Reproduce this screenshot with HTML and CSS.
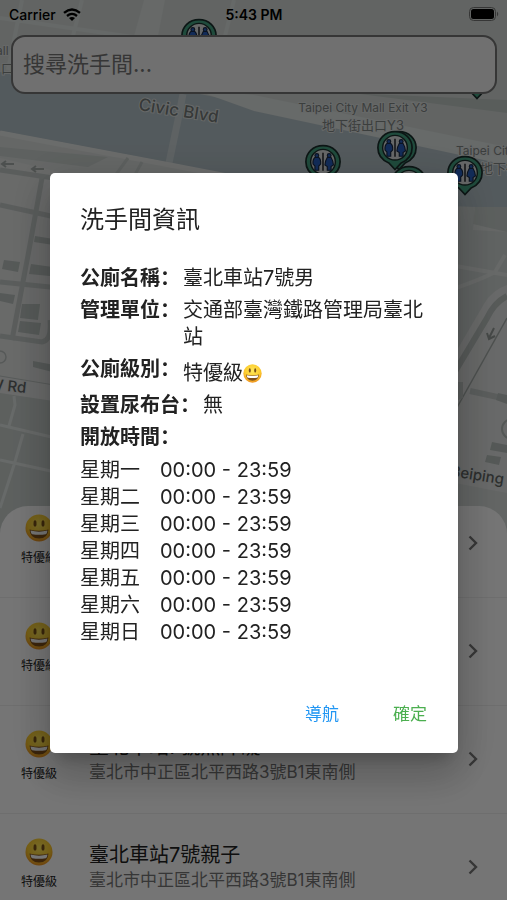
FILE: index.html
```html
<!DOCTYPE html>
<html lang="zh">
<head>
    <meta charset="UTF-8">
    <meta name="viewport" content="width=device-width, initial-scale=1.0">
    <title>洗手間資訊</title>
    <link rel="stylesheet" href="styles.css">
</head>
<body>
    <!-- shared icons -->
    <svg class="icon-defs" aria-hidden="true">
        <defs>
            <radialGradient id="face-fill" cx="50%" cy="35%" r="65%">
                <stop offset="0" stop-color="#ffe85a"/>
                <stop offset="0.65" stop-color="#fccb2d"/>
                <stop offset="1" stop-color="#ee9320"/>
            </radialGradient>
            <symbol id="smile" viewBox="0 0 28 28">
                <circle cx="14" cy="14" r="13.5" fill="url(#face-fill)"/>
                <ellipse cx="10" cy="9.4" rx="1.5" ry="3.2" fill="#7a5218"/>
                <ellipse cx="18" cy="9.4" rx="1.5" ry="3.2" fill="#7a5218"/>
                <path d="M4.5 15.5Q14 18.2 23.5 15.5Q23 24.5 14 24.5Q5 24.5 4.5 15.5Z" fill="#80501a"/>
                <path d="M5.6 16.6Q14 18.9 22.4 16.6Q22.2 20 20.8 20.2Q14 21.2 7.2 20.2Q5.8 20 5.6 16.6Z" fill="#fff"/>
            </symbol>
            <symbol id="pin" viewBox="0 0 40 46">
                <path d="M20 1.5C9.500 1.500 2 9 2 18.500C2 27 7.500 32 13.500 34.500L20 41.500L26.500 34.500C32.500 32 38 27 38 18.500C38 9 30.500 1.500 20 1.500Z" fill="#45a383" stroke="#1c302e" stroke-width="1.800"/>
                <circle cx="20" cy="18.500" r="13" fill="#dfe2e2" stroke="#1c302e" stroke-width="1.500"/>
                <path d="M20 9V28" stroke="#26282c" stroke-width="1.600"/>
                <g fill="#285fc0" stroke="#172945" stroke-width="1.200">
                    <path d="M11.500 14Q9 16 9.500 21L11.500 23V27.500H15.500V23L17.500 21Q18 16 15.500 14Z"/>
                    <circle cx="13.500" cy="12" r="2"/>
                    <path d="M24.500 14Q22.500 17 22 22L24.500 23.500V27.500H28.500V23.500L31 22Q30.500 17 28.500 14Z"/>
                    <circle cx="26.500" cy="12" r="2"/>
                </g>
            </symbol>
            <symbol id="chevron" viewBox="0 0 12 18">
                <path d="M2.500 2.500L9 9L2.500 15.500" fill="none" stroke="currentColor" stroke-width="2.400"/>
            </symbol>
        </defs>
    </svg>

    <div class="app">
        <svg class="map" viewBox="0 0 507 560" preserveAspectRatio="xMidYMin slice" aria-label="地圖">
            <rect width="507" height="560" fill="#d5dbd8"/>

            <!-- north side -->
            <path d="M144 0H165L158 36H134Z" fill="#e0e4e2"/>
            <path d="M22 0L8 70M82 0L72 40M0 18L140 38M234 0L225 36" fill="none" stroke="#dfe4e2" stroke-width="4"/>
            <path d="M160 85L507 100V113L360 94Z" fill="#c3cac7"/>

            <!-- Civic Blvd -->
            <path d="M0 72L190 92L254 105L507 165V212L380 205L170 163L0 131Z" fill="#b6c4ca"/>
            <path d="M190 88L254 95L507 147V165L254 111Z" fill="#e0e6e4"/>
            <path d="M183 94L178 120L169 163" fill="none" stroke="#ccd6d8" stroke-width="7"/>
            <path d="M0 131L170 163L380 205L507 210V240H0Z" fill="#dde1df"/>
            <path d="M0 133L170 165L300 190" fill="none" stroke="#e8ebe9" stroke-width="5"/>
            <path d="M0 147L108 157L88 167L0 156Z" fill="#cdd4d1"/>
            <path d="M128 158L112 180M142 162L132 180" stroke="#cbd2cf" stroke-width="3"/>

            <!-- blocks on the left -->
            <path d="M0 158L60 172V400H0Z" fill="#e4e6e5"/>
            <g fill="none" stroke="#c5cbc9" stroke-width="5">
                <path d="M0 170L60 179M0 205L60 218M0 282L60 288M0 336L42 342Q52 340 50 320"/>
                <path d="M42 178L29 250L12 340"/>
            </g>
            <g fill="#bbc3c0">
                <path d="M4 260L20 262L18 272L2 269Z"/>
                <path d="M31 264L60 268V277L29 274Z"/>
                <path d="M0 293L15 295L13 304L0 301Z"/>
                <path d="M22 304L40 304L38 320L20 318Z"/>
                <path d="M20 321L41 323L39 335L18 332Z"/>
                <path d="M35 236L60 240V246L34 242Z"/>
                <path d="M33 361L60 366V374L33 367Z"/>
            </g>
            <circle cx="0" cy="357" r="6" fill="none" stroke="#bcc2c0" stroke-width="1.500"/>
            <path d="M2 164H14M6 161L2 164L6 167M32 169H44M36 166L32 169L36 172" fill="none" stroke="#a8afac" stroke-width="2"/>
            <path d="M0 376L60 386V405L0 392Z" fill="#e6e8e7"/>
            <path d="M0 376L60 386" stroke="#bfc6c3" stroke-width="1"/>
            <path d="M0 393L60 402V560H0Z" fill="#cad1ce"/>
            <path d="M14 396L15 405L9 426M0 425L60 439M0 460L60 473M23 434L14 465L0 508" fill="none" stroke="#e1e6e4" stroke-width="3"/>

            <!-- streets on the right -->
            <path d="M450 206L475 207L473 230L507 232V560H450Z" fill="#d1d7d5"/>
            <path d="M475 207H507V232L473 224Z" fill="#c9d0cd"/>
            <path d="M450 265L507 275M450 290Q480 280 495 272L505 255" fill="none" stroke="#e0e4e2" stroke-width="4"/>
            <path d="M507 285Q492 290 484 304L450 362V560H507Z" fill="#e3e5e4"/>
            <path d="M507 296Q494 303 487 318L450 380" fill="none" stroke="#bdc4c1" stroke-width="6"/>
            <path d="M507 318L450 420" fill="none" stroke="#a8afac" stroke-width="1.500"/>
            <path d="M494 328L489 338M487 333L489 339L495 336" fill="none" stroke="#969d9a" stroke-width="2"/>
            <path d="M470 391L507 399M460 382V396L450 401" fill="none" stroke="#c5cbc9" stroke-width="6"/>
            <path d="M498 393L507 395V404L496 400ZM492 442L507 445V453L490 450ZM487 455L501 457L499 465L485 462Z" fill="#b9c1be"/>
            <circle cx="512" cy="429" r="10" fill="none" stroke="#b8bfbc" stroke-width="2"/>
            <path d="M450 482L507 493V560H450Z" fill="#d7dcda"/>

            <g class="map-label road">
                <text x="138" y="110" transform="rotate(9 138 110)">Civic Blvd</text>
            </g>
            <g class="map-label street">
                <text x="-12" y="389" transform="rotate(6 -12 389)">W Rd</text>
                <text x="450" y="476" transform="rotate(9 450 476)">Beiping W</text>
            </g>
            <g class="map-label place">
                <text x="363" y="112" text-anchor="middle">Taipei City Mall Exit Y3</text>
                <text x="456" y="155">Taipei City Mall</text>
                <text x="-4" y="55">all</text>
            </g>
            <g class="map-label place-zh">
                <text x="363" y="130" text-anchor="middle">地下街出口Y3</text>
                <text x="480" y="173">地下街</text>
                <text x="1" y="73">口</text>
            </g>

            <use href="#pin" x="180" y="18" width="38" height="44"/>
            <use href="#pin" x="458" y="59" width="38" height="44"/>
            <use href="#pin" x="304" y="144" width="38" height="44"/>
            <use href="#pin" x="390" y="165" width="38" height="44"/>
            <use href="#pin" x="380" y="130" width="38" height="44"/>
            <use href="#pin" x="376" y="130" width="38" height="44"/>
            <use href="#pin" x="446" y="155" width="38" height="44"/>
        </svg>

        <header class="status-bar">
            <span class="carrier">
                Carrier
                <svg class="wifi" viewBox="0 0 18 13">
                    <path d="M1 4.800Q9 -2 17 4.800" fill="none" stroke="#000" stroke-width="2.400"/>
                    <path d="M4 8Q9 3.800 14 8" fill="none" stroke="#000" stroke-width="2.300"/>
                    <path d="M6 10Q9 7.800 12 10L9 13Z"/>
                </svg>
            </span>
            <span class="clock">5:43 PM</span>
            <svg class="battery" viewBox="0 0 30 14">
                <rect x="0.500" y="0.500" width="26" height="13" rx="4" fill="none" stroke="#777"/>
                <rect x="2" y="2" width="23" height="10" rx="2.500"/>
                <path d="M28 4.500Q30.500 7 28 9.500Z" fill="#777"/>
            </svg>
        </header>

        <input class="search" type="text" placeholder="搜尋洗手間..." aria-label="搜尋洗手間">

        <section class="sheet">
            <ul class="toilet-list">
                <li class="toilet">
                    <div class="grade">
                        <svg class="face"><use href="#smile"/></svg>
                        <span>特優級</span>
                    </div>
                    <div class="place-info">
                        <h2>臺北車站7號男</h2>
                        <p>臺北市中正區北平西路3號B1東南側</p>
                    </div>
                    <svg class="chevron"><use href="#chevron"/></svg>
                </li>
                <li class="toilet">
                    <div class="grade">
                        <svg class="face"><use href="#smile"/></svg>
                        <span>特優級</span>
                    </div>
                    <div class="place-info">
                        <h2>臺北車站7號女</h2>
                        <p>臺北市中正區北平西路3號B1東南側</p>
                    </div>
                    <svg class="chevron"><use href="#chevron"/></svg>
                </li>
                <li class="toilet">
                    <div class="grade">
                        <svg class="face"><use href="#smile"/></svg>
                        <span>特優級</span>
                    </div>
                    <div class="place-info">
                        <h2>臺北車站7號無障礙</h2>
                        <p>臺北市中正區北平西路3號B1東南側</p>
                    </div>
                    <svg class="chevron"><use href="#chevron"/></svg>
                </li>
                <li class="toilet">
                    <div class="grade">
                        <svg class="face"><use href="#smile"/></svg>
                        <span>特優級</span>
                    </div>
                    <div class="place-info">
                        <h2>臺北車站7號親子</h2>
                        <p>臺北市中正區北平西路3號B1東南側</p>
                    </div>
                    <svg class="chevron"><use href="#chevron"/></svg>
                </li>
            </ul>
        </section>
    </div>

    <div class="backdrop">
        <div class="dialog" role="dialog" aria-labelledby="dialog-title">
            <h1 id="dialog-title">洗手間資訊</h1>

            <dl class="details">
                <div class="detail"><dt>公廁名稱：</dt><dd>臺北車站7號男</dd></div>
                <div class="detail"><dt>管理單位：</dt><dd>交通部臺灣鐵路管理局臺北站</dd></div>
                <div class="detail">
                    <dt>公廁級別：</dt>
                    <dd class="level">特優級<svg class="face-small"><use href="#smile"/></svg></dd>
                </div>
                <div class="detail"><dt>設置尿布台：</dt><dd>無</dd></div>
                <div class="detail"><dt>開放時間：</dt></div>
            </dl>

            <table class="hours">
                <tr><th scope="row">星期一</th><td>00:00 - 23:59</td></tr>
                <tr><th scope="row">星期二</th><td>00:00 - 23:59</td></tr>
                <tr><th scope="row">星期三</th><td>00:00 - 23:59</td></tr>
                <tr><th scope="row">星期四</th><td>00:00 - 23:59</td></tr>
                <tr><th scope="row">星期五</th><td>00:00 - 23:59</td></tr>
                <tr><th scope="row">星期六</th><td>00:00 - 23:59</td></tr>
                <tr><th scope="row">星期日</th><td>00:00 - 23:59</td></tr>
            </table>

            <div class="actions">
                <button class="navigate" type="button">導航</button>
                <button class="confirm" type="button">確定</button>
            </div>
        </div>
    </div>
</body>
</html>
```

FILE: styles.css
```css
* {
    box-sizing: border-box;
}

body {
    margin: 0;
    font-family: Inter, "Noto Sans CJK TC", sans-serif;
    color: #222;
}

h1, h2, p, ul, dl, dd {
    margin: 0;
    padding: 0;
    font-weight: normal;
}

.icon-defs {
    position: absolute;
    width: 0;
    height: 0;
}

.app {
    position: relative;
    display: flex;
    flex-direction: column;
    height: 100vh;
    overflow: hidden;
}

/* Map lies behind the whole screen */
.map {
    position: absolute;
    top: 0;
    left: 0;
    width: 100%;
    height: 560px;
}

.map-label {
    fill: #777c7b;
    stroke: #dfe3e2;
    stroke-width: 2px;
    paint-order: stroke;
}

.road {
    font-size: 17px;
    font-weight: 500;
}

.street {
    font-size: 15px;
    font-weight: 500;
    fill: #626665;
}

.place {
    font-size: 12px;
    fill: #828786;
}

.place-zh {
    font-size: 13px;
    fill: #828786;
}

.status-bar {
    position: relative;
    display: grid;
    grid-template-columns: 1fr auto 1fr;
    align-items: center;
    height: 28px;
    padding: 0 8px 0 9px;
    font-size: 14px;
    font-weight: 500;
    color: #000;
}

.carrier {
    display: flex;
    align-items: center;
    gap: 7px;
}

.wifi {
    width: 18px;
    height: 13px;
}

.clock {
    font-weight: 600;
}

.battery {
    width: 30px;
    height: 14px;
    justify-self: end;
}

.search {
    position: relative;
    height: 59px;
    margin: 7px 10px 0 11px;
    padding: 0 10px 2px;
    border: 2px solid #777;
    border-radius: 14px;
    background-color: #f4f4f4;
    font-family: inherit;
    font-size: 22px;
}

.search::placeholder {
    color: #777;
    opacity: 1;
}

/* Bottom sheet */
.sheet {
    position: relative;
    height: 394px;
    margin-top: auto;
    overflow: hidden;
    background-color: #fff;
    border-radius: 28px 28px 0 0;
}

.toilet-list {
    margin-top: -16px; /* list is slightly scrolled */
    list-style: none;
}

.toilet {
    display: flex;
    align-items: center;
    height: 108px;
    padding: 0 28px 2px 20px;
    border-bottom: 1px solid #f0f0f0;
}

.grade {
    display: flex;
    flex-direction: column;
    align-items: center;
    gap: 6px;
    width: 38px;
    padding-bottom: 4px;
    font-size: 12px;
    line-height: 20px;
    white-space: nowrap;
}

.face {
    width: 28px;
    height: 28px;
}

.place-info {
    flex: 1;
    margin-left: 31px;
}

.place-info h2 {
    font-size: 20px;
    line-height: 26px;
}

.place-info p {
    font-size: 17px;
    line-height: 24px;
    color: #777;
}

.chevron {
    width: 12px;
    height: 18px;
    color: #777;
}

/* Dialog */
.backdrop {
    position: fixed;
    top: 0;
    right: 0;
    bottom: 0;
    left: 0;
    display: flex;
    align-items: center;
    padding: 26px 49px 0 50px;
    background-color: rgba(0, 0, 0, 0.54);
}

.dialog {
    width: 100%;
    padding: 30px 30px 17px;
    background-color: #fff;
    border-radius: 5px;
    box-shadow: 0 11px 15px -7px rgba(0, 0, 0, 0.2), 0 24px 38px 3px rgba(0, 0, 0, 0.14), 0 9px 46px 8px rgba(0, 0, 0, 0.12);
}

.dialog h1 {
    font-size: 24px;
    line-height: 34px;
}

.details {
    display: flex;
    flex-direction: column;
    gap: 5px;
    margin-top: 28px;
    font-size: 20px;
    line-height: 27px;
}

.detail {
    display: flex;
    gap: 3px;
}

/* the SC face keeps the full-width colon next to the label */
.detail dt {
    flex: none;
    font-family: Inter, "Noto Sans CJK SC", sans-serif;
    font-weight: bold;
}

.level {
    display: flex;
    align-items: center;
    padding-top: 4px;
}

.face-small {
    width: 19px;
    height: 19px;
}

.hours {
    margin-top: 6px;
    border-collapse: collapse;
    font-size: 20px;
    line-height: 27px;
}

.hours th,
.hours td {
    padding: 0;
    font-weight: normal;
}

.hours td {
    padding-left: 20px;
}

.actions {
    display: flex;
    justify-content: flex-end;
    gap: 20px;
    margin-top: 46px;
    margin-right: -16px;
}

.actions button {
    padding: 0 17px;
    border: none;
    background: none;
    font-family: inherit;
    font-size: 17px;
    line-height: 44px;
    cursor: pointer;
}

.actions .navigate {
    color: #2196f3;
}

.actions .confirm {
    color: #4caf50;
}
```
